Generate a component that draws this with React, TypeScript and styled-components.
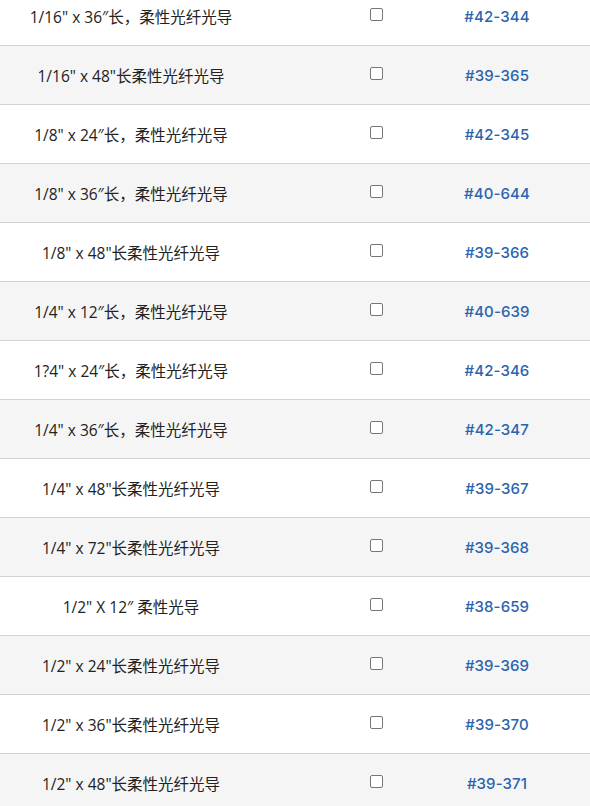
import React from "react";
import styled, { createGlobalStyle } from "styled-components";

const GlobalStyle = createGlobalStyle`
  html, body { margin: 0; padding: 0; background: #ffffff; overflow: hidden; }
  body { font-family: "Open Sans", "Noto Sans CJK SC", sans-serif; }
`;

const Table = styled.div`
  display: flex;
  flex-direction: column;
  margin-top: -14px;
  width: 590px;
`;

const Row = styled.div<{ $shaded: boolean }>`
  display: grid;
  grid-template-columns: 262px 142px 1fr;
  align-items: center;
  height: 58px;
  border-top: 1px solid #d4d4d4;
  background: ${(p) => (p.$shaded ? "#f5f5f5" : "#ffffff")};
`;

const NameCell = styled.div`
  text-align: center;
  font-size: 15.5px;
  color: #222222;
  white-space: nowrap;
  padding-top: 1px;
`;

const CheckCell = styled.div`
  display: flex;
  justify-content: flex-end;
  padding-right: 21px;
  padding-bottom: 3px;
`;

const Box = styled.span`
  display: block;
  width: 11px;
  height: 11px;
  border: 1px solid #767676;
  border-radius: 2px;
  background: #ffffff;
`;

const PartCell = styled.div`
  text-align: center;
  font-family: Inter, "Open Sans", sans-serif;
  font-size: 15px;
  font-weight: 500;
  letter-spacing: 0.1px;
  color: #2a64ae;
  padding-top: 1px;
`;

const rows: [string, string][] = [
  ["1/16\" x 36″长，柔性光纤光导", "#42-344"],
  ["1/16\" x 48\"长柔性光纤光导", "#39-365"],
  ["1/8\" x 24″长，柔性光纤光导", "#42-345"],
  ["1/8\" x 36″长，柔性光纤光导", "#40-644"],
  ["1/8\" x 48\"长柔性光纤光导", "#39-366"],
  ["1/4\" x 12″长，柔性光纤光导", "#40-639"],
  ["1?4\" x 24″长，柔性光纤光导", "#42-346"],
  ["1/4\" x 36″长，柔性光纤光导", "#42-347"],
  ["1/4\" x 48\"长柔性光纤光导", "#39-367"],
  ["1/4\" x 72\"长柔性光纤光导", "#39-368"],
  ["1/2\" X 12″ 柔性光导", "#38-659"],
  ["1/2\" x 24\"长柔性光纤光导", "#39-369"],
  ["1/2\" x 36\"长柔性光纤光导", "#39-370"],
  ["1/2\" x 48\"长柔性光纤光导", "#39-371"],
];

export default function App() {
  return (
    <>
      <GlobalStyle />
      <Table>
        {rows.map(([name, part], i) => (
          <Row key={part} $shaded={i % 2 === 1}>
            <NameCell>{name}</NameCell>
            <CheckCell>
              <Box />
            </CheckCell>
            <PartCell>{part}</PartCell>
          </Row>
        ))}
      </Table>
    </>
  );
}
